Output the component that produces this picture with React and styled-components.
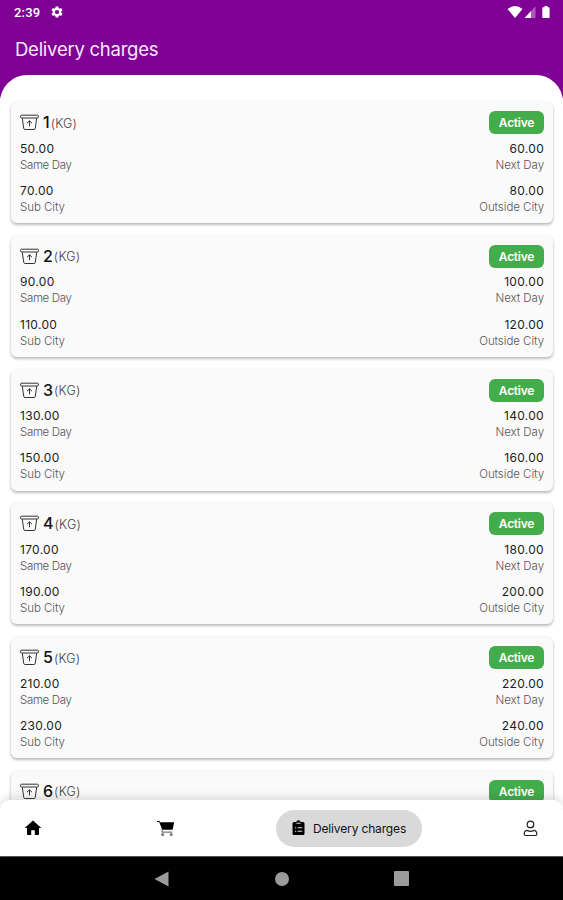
import React from 'react'
import styled, { createGlobalStyle } from 'styled-components'
import { MdSettings } from 'react-icons/md'

const GlobalStyle = createGlobalStyle`
    * {
        box-sizing: border-box;
    }
    body {
        margin: 0;
        overflow: hidden;
        font-family: Inter, "Open Sans", sans-serif;
    }
`
const Screen = styled.div`
    height: 900px;
    width: 100%;
    display: flex;
    flex-direction: column;
    overflow: hidden;
    background: linear-gradient(#800096 98px, #fff 98px);
`
const StatusBar = styled.div`
    height: 24px;
    flex: none;
    display: flex;
    align-items: center;
    justify-content: space-between;
    padding: 0 12px 0 14px;
    color: #fff;
`
const StatusGroup = styled.div`
    display: flex;
    align-items: center;
    svg {
        display: block;
    }
`
const Clock = styled.span`
    font-family: Roboto, sans-serif;
    font-size: 13px;
    font-weight: 500;
    letter-spacing: 0.2px;
    margin-right: 10px;
`
const Title = styled.h1`
    height: 51px;
    flex: none;
    margin: 0;
    padding-left: 15px;
    line-height: 51px;
    font-size: 18.5px;
    font-weight: 400;
    letter-spacing: -0.25px;
    color: #f8e8fb;
`
const Sheet = styled.main`
    flex: 1;
    min-height: 0;
    overflow: hidden;
    padding: 27px 10px 0 11px;
    display: flex;
    flex-direction: column;
    gap: 12.8px;
    background: #fff;
    border-radius: 27px 27px 0 0;
`
const Card = styled.section`
    flex: none;
    height: 121px;
    padding: 9px 9px 0 9px;
    background: #fafafa;
    border-radius: 6px;
    box-shadow: 0 2px 3px rgba(0, 0, 0, 0.25), 0 0 3px rgba(0, 0, 0, 0.07);
`
const CardHead = styled.div`
    height: 23px;
    margin-bottom: 5.6px;
    display: flex;
    align-items: center;
    justify-content: space-between;
`
const Weight = styled.div`
    display: flex;
    align-items: center;
    font-size: 16px;
    line-height: 23px;
    font-weight: 500;
    color: #111;
    svg {
        margin-right: 4px;
    }
`
const Unit = styled.span`
    font-size: 12.5px;
    font-weight: 300;
    letter-spacing: 0.2px;
    margin-left: 1px;
    padding-top: 1px;
    color: #444;
`
const Badge = styled.span`
    width: 55px;
    height: 23px;
    border-radius: 6px;
    background: #43ad4b;
    color: #fff;
    font-size: 12px;
    font-weight: 600;
    letter-spacing: -0.25px;
    line-height: 23px;
    text-align: center;
`
const PriceRow = styled.div`
    display: flex;
    justify-content: space-between;
    height: 34px;
    margin-bottom: 8.2px;
`
const Price = styled.div`
    text-align: ${({ $right }) => ($right ? 'right' : 'left')};
`
const Amount = styled.div`
    font-size: 12px;
    line-height: 17px;
    letter-spacing: 0.3px;
    color: #1c1c1c;
`
const Label = styled.div`
    font-size: 11.5px;
    line-height: 17px;
    font-weight: 300;
    letter-spacing: ${({ $tight }) => ($tight ? '-0.35px' : '-0.05px')};
    color: #555;
`
const NavBar = styled.nav`
    position: relative;
    height: 56px;
    flex: none;
    display: flex;
    align-items: center;
    justify-content: space-between;
    padding: 0 11px 0 10px;
    background: #fff;
    border-radius: 10px 10px 0 0;
    box-shadow: 0 -3px 10px rgba(0, 0, 0, 0.13);
    svg {
        display: block;
    }
`
const NavItem = styled.div`
    display: flex;
    align-items: center;
    padding: 0 14px;
`
const ActiveItem = styled(NavItem)`
    width: 146px;
    height: 37px;
    padding: 0 0 0 16px;
    gap: 8px;
    border-radius: 19px;
    background: #d9d9d9;
    font-size: 12px;
    letter-spacing: -0.15px;
    color: #111;
    white-space: nowrap;
`
const SystemBar = styled.div`
    height: 44px;
    flex: none;
    display: flex;
    align-items: center;
    justify-content: space-between;
    padding: 0 154px;
    background: #000;
    border-top: 1px solid #555;
    svg {
        display: block;
    }
`

const rates = [
  { kg: 1, same: '50.00', next: '60.00', sub: '70.00', outside: '80.00' },
  { kg: 2, same: '90.00', next: '100.00', sub: '110.00', outside: '120.00' },
  { kg: 3, same: '130.00', next: '140.00', sub: '150.00', outside: '160.00' },
  { kg: 4, same: '170.00', next: '180.00', sub: '190.00', outside: '200.00' },
  { kg: 5, same: '210.00', next: '220.00', sub: '230.00', outside: '240.00' },
  { kg: 6, same: '250.00', next: '260.00', sub: '270.00', outside: '280.00' },
]

const BoxIcon = () => (
  <svg width="19" height="17" viewBox="0 0 19 17" fill="none" stroke="#333" strokeWidth="1">
    <rect x="0.6" y="1.2" width="17.8" height="2.8" rx="0.9" />
    <path d="M2.3 4.2 3.7 14.2q.2 1.3 1.4 1.3h8.8q1.2 0 1.4-1.3L16.7 4.2" />
    <path d="M9.5 12.3V6.8M7 9.2l2.5-2.4L12 9.2" />
  </svg>
)

const SignalIcons = () => (
  <svg width="44" height="14" viewBox="0 0 44 14" fill="#fff">
    <path d="M.5 4Q8-1.8 15.5 4L8 13Z" />
    <path d="M17.5 13 24 6v7Z" />
    <path d="M24 6 28.5 1.2V13H24Z" opacity=".35" />
    <path d="M36 2.2h1.5V1h3v1.2H42q.6 0 .6.7v9.4q0 .7-.6.7h-6q-.7 0-.7-.7V2.9q0-.7.7-.7Z" />
  </svg>
)

const HomeIcon = () => (
  <svg width="18" height="16" viewBox="0 0 18 16">
    <path d="M9 .5 17.3 8H15v6.2q0 .8-.8.8h-3.4v-4.7H7.2V15H3.8q-.8 0-.8-.8V8H.7Z" />
  </svg>
)

const CartIcon = () => (
  <svg width="18" height="17" viewBox="0 0 18 17">
    <path d="M0 1h2.6l.4 1.2h14.2l-1.6 7.6H5.2L2.2 2H0Z" />
    <path d="m4.7 9.5.6 2.7h9.8" fill="none" stroke="#777" strokeWidth="1.2" />
    <circle cx="5.7" cy="14.4" r="1.5" fill="#777" />
    <circle cx="14.2" cy="14.4" r="1.5" fill="#777" />
  </svg>
)

const ClipboardIcon = () => (
  <svg width="13" height="16" viewBox="0 0 13 16">
    <path d="M2 2h2.3Q4.6.3 6.5.3T8.7 2H11q1.5 0 1.5 1.5v10q0 1.5-1.5 1.5H2Q.5 15 .5 13.5v-10Q.5 2 2 2Z" />
    <path d="M4.4 3.3h4.2M3 7.7h1.2M5.5 7.7h4.7M3 11.2h1.2M5.5 11.2h4.7" stroke="#d9d9d9" strokeWidth="1.1" />
  </svg>
)

const UserIcon = () => (
  <svg width="15" height="17" viewBox="0 0 15 17" fill="none" stroke="#222" strokeWidth="1.2">
    <circle cx="7.5" cy="4.4" r="3.3" />
    <path d="M1.2 14.3q0-3.9 3.2-3.9 1.4.9 3.1.9t3.1-.9q3.2 0 3.2 3.9 0 1.2-1.2 1.2H2.4q-1.2 0-1.2-1.2Z" />
  </svg>
)

const PriceItem = ({ amount, label, right, tight }) => (
  <Price $right={right}>
    <Amount>{amount}</Amount>
    <Label $tight={tight}>{label}</Label>
  </Price>
)

const RateCard = ({ rate }) => (
  <Card>
    <CardHead>
      <Weight>
        <BoxIcon />
        {rate.kg}
        <Unit>(KG)</Unit>
      </Weight>
      <Badge>Active</Badge>
    </CardHead>
    <PriceRow>
      <PriceItem amount={rate.same} label="Same Day" tight />
      <PriceItem amount={rate.next} label="Next Day" right />
    </PriceRow>
    <PriceRow>
      <PriceItem amount={rate.sub} label="Sub City" />
      <PriceItem amount={rate.outside} label="Outside City" right />
    </PriceRow>
  </Card>
)

const App = () => {
  return (
    <Screen>
      <GlobalStyle />
      <StatusBar>
        <StatusGroup>
          <Clock>2:39</Clock>
          <MdSettings size={14} />
        </StatusGroup>
        <StatusGroup>
          <SignalIcons />
        </StatusGroup>
      </StatusBar>
      <Title>Delivery charges</Title>
      <Sheet>
        {rates.map((rate) => (
          <RateCard rate={rate} key={rate.kg} />
        ))}
      </Sheet>
      <NavBar>
        <NavItem><HomeIcon /></NavItem>
        <NavItem><CartIcon /></NavItem>
        <ActiveItem>
          <ClipboardIcon />
          Delivery charges
        </ActiveItem>
        <NavItem><UserIcon /></NavItem>
      </NavBar>
      <SystemBar>
        <svg width="15" height="16" viewBox="0 0 15 16" fill="#9b9b9b"><path d="M.5 8 14.5.5v15Z" /></svg>
        <svg width="14" height="14" viewBox="0 0 14 14" fill="#9b9b9b"><circle cx="7" cy="7" r="7" /></svg>
        <svg width="15" height="15" viewBox="0 0 15 15" fill="#9b9b9b"><rect width="15" height="15" rx="1" /></svg>
      </SystemBar>
    </Screen>
  )
}

export default App
